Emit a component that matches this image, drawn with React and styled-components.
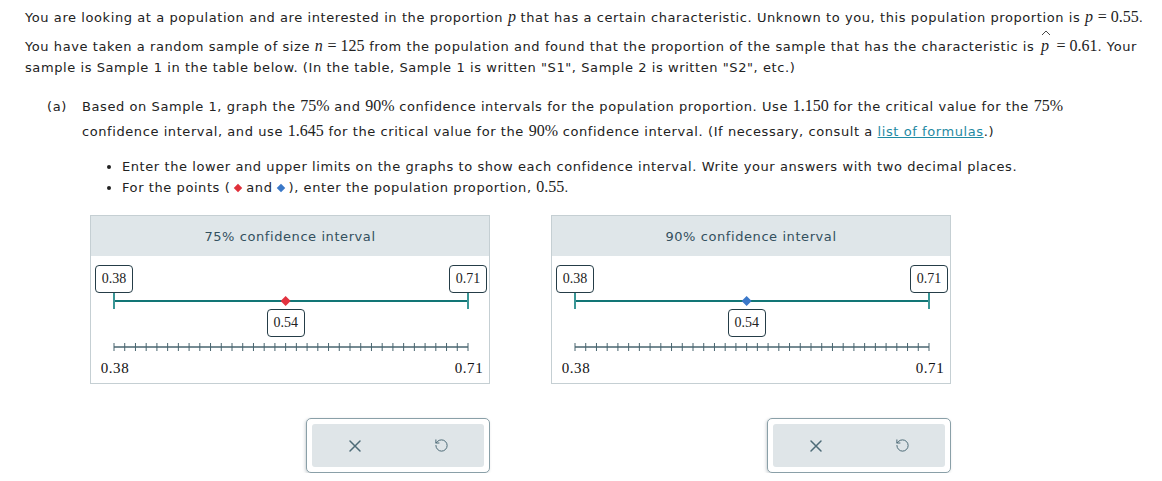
import styled, { createGlobalStyle } from "styled-components";
import { RotateCcw } from "lucide-react";

const GlobalStyle = createGlobalStyle`
  body {
    margin: 0;
    background: #ffffff;
    font-family: "DejaVu Sans", Verdana, sans-serif;
    font-size: 13px;
    letter-spacing: 0.58px;
    color: #222222;
  }
`;

const MIN = 0.38;
const MAX = 0.71;
const X0 = 23;
const X1 = 377;
const toX = (v) => X0 + ((v - MIN) / (MAX - MIN)) * (X1 - X0);

const Page = styled.div`
  padding: 7px 8px 0 25px;
`;

const Para = styled.p`
  margin: 0 0 8px;
  line-height: 21px;
  white-space: nowrap;
`;

const M = styled.span`
  font-family: "Liberation Serif", "Times New Roman", serif;
  font-size: 16px;
  line-height: 1;
  letter-spacing: 0;
  font-style: ${(p) => (p.$italic ? "italic" : "normal")};
`;

const Hat = styled.span`
  position: relative;
  display: inline-block;
  margin: 0 2px;
  font-family: "Liberation Serif", "Times New Roman", serif;
  font-size: 16px;
  line-height: 1;
  font-style: italic;

  svg {
    position: absolute;
    left: 0px;
    top: -8px;
  }
`;

const Part = styled.div`
  display: grid;
  grid-template-columns: 35px 1fr;
  margin: 16px 0 0 22px;
  line-height: 25px;
`;

const Body = styled.div`
  white-space: nowrap;
`;

const Link = styled.a`
  color: #1f8aa3;
  text-decoration: underline;
`;

const Bullets = styled.ul`
  margin: 12px 0 0 57px;
  padding-left: 40px;
  line-height: 21px;
`;

const Dot = styled.span`
  display: inline-block;
  width: 6px;
  height: 6px;
  margin: 0 5px 1px;
  transform: rotate(45deg);
  background: ${(p) => p.$color};
`;

const Row = styled.div`
  display: flex;
  gap: 61px;
  margin: 17px 0 0 65px;
`;

const Column = styled.div`
  display: flex;
  flex-direction: column;
  align-items: flex-end;
  width: 400px;
`;

const Panel = styled.div`
  width: 400px;
  box-sizing: border-box;
  border: 1px solid #c5cfd3;
`;

const Header = styled.div`
  height: 40px;
  background: #dfe6e9;
  color: #33505e;
  display: flex;
  align-items: center;
  justify-content: center;
`;

const Graph = styled.div`
  position: relative;
  height: 127px;

  svg {
    display: block;
  }
`;

const ValueBox = styled.div`
  position: absolute;
  top: ${(p) => p.$top}px;
  width: 38px;
  height: 28px;
  box-sizing: border-box;
  border: 1px solid #253d47;
  border-radius: 4px;
  background: #ffffff;
  display: flex;
  align-items: center;
  justify-content: center;
  font-family: "Liberation Serif", "Times New Roman", serif;
  font-size: 14px;
  letter-spacing: 0;
  color: #222222;
`;

const Tools = styled.div`
  margin-top: 34px;
  width: 184px;
  height: 55px;
  box-sizing: border-box;
  padding: 5px;
  border: 1px solid #8aa0a8;
  border-radius: 5px;
  background: #ffffff;
  box-shadow: -1px 1px 3px rgba(60, 80, 90, 0.25);
`;

const ToolInner = styled.div`
  height: 100%;
  border-radius: 3px;
  background: #dfe5e8;
  display: grid;
  grid-template-columns: 1fr 1fr;
`;

const ToolButton = styled.button`
  border: 0;
  background: transparent;
  display: flex;
  align-items: center;
  justify-content: center;
  color: #4d6b77;
  padding: 0;
`;

const XIcon = () => (
  <svg width="14" height="14" viewBox="0 0 14 14" fill="none" stroke="currentColor" strokeWidth="1.5" strokeLinecap="round">
    <path d="M2 2 L12 12 M12 2 L2 12" />
  </svg>
);

const HatMark = () => (
  <svg width="10" height="6" viewBox="0 0 10 6" fill="none" stroke="#333" strokeWidth="0.9">
    <path d="M1 5 L5 1 L9 5" />
  </svg>
);

const NumberLine = ({ point, color }) => {
  const ticks = [];
  for (let i = 0; i <= 33; i++) {
    const x = X0 + (i * (X1 - X0)) / 33;
    ticks.push(<line key={i} x1={x} x2={x} y1={87} y2={95} stroke="#48656f" strokeWidth="1" />);
  }
  const px = toX(point);
  return (
    <svg width="398" height="127">
      <line x1={X0} x2={X1} y1={45} y2={45} stroke="#127676" strokeWidth="2" />
      <line x1={X0} x2={X0} y1={37} y2={53} stroke="#3a9696" strokeWidth="2" />
      <line x1={X1} x2={X1} y1={37} y2={53} stroke="#3a9696" strokeWidth="2" />
      <polygon points={`${px},${40} ${px + 5},${45} ${px},${50} ${px - 5},${45}`} fill={color} />
      <line x1={X0} x2={X1} y1={91} y2={91} stroke="#48656f" strokeWidth="1.5" />
      {ticks}
      <text x={X0 + 1} y={117} textAnchor="middle" fontFamily="Liberation Serif, serif" fontSize="15" fill="#111">
        0.38
      </text>
      <text x={X1 + 1} y={117} textAnchor="middle" fontFamily="Liberation Serif, serif" fontSize="15" fill="#111">
        0.71
      </text>
    </svg>
  );
};

const IntervalGraph = ({ title, color }) => (
  <Column>
    <Panel>
      <Header>{title}</Header>
      <Graph>
        <NumberLine point={0.54} color={color} />
        <ValueBox $top={9} style={{ left: toX(0.38) - 19 }}>0.38</ValueBox>
        <ValueBox $top={9} style={{ left: toX(0.71) - 19 }}>0.71</ValueBox>
        <ValueBox $top={53} style={{ left: toX(0.54) - 19 }}>0.54</ValueBox>
      </Graph>
    </Panel>
    <Tools>
      <ToolInner>
        <ToolButton aria-label="clear"><XIcon /></ToolButton>
        <ToolButton aria-label="undo"><RotateCcw size={15} strokeWidth={1.6} /></ToolButton>
      </ToolInner>
    </Tools>
  </Column>
);

export default function App() {
  return (
    <>
      <GlobalStyle />
      <Page>
        <Para>
          You are looking at a population and are interested in the proportion <M $italic>p</M> that has a certain
          characteristic. Unknown to you, this population proportion is <M $italic>p</M> <M>= 0.55</M>.
        </Para>
        <Para>
          You have taken a random sample of size <M $italic>n</M> <M>= 125</M> from the population and found that the
          proportion of the sample that has the characteristic is{" "}
          <Hat>
            <HatMark />p
          </Hat>{" "}
          <M>= 0.61</M>. Your
          <br />
          sample is Sample 1 in the table below. (In the table, Sample 1 is written "S1", Sample 2 is written "S2", etc.)
        </Para>
        <Part>
          <span>(a)</span>
          <Body>
            Based on Sample 1, graph the <M>75%</M> and <M>90%</M> confidence intervals for the population proportion.
            Use <M>1.150</M> for the critical value for the <M>75%</M>
            <br />
            confidence interval, and use <M>1.645</M> for the critical value for the <M>90%</M> confidence interval.
            (If necessary, consult a <Link href="#">list of formulas</Link>.)
          </Body>
        </Part>
        <Bullets>
          <li>
            Enter the lower and upper limits on the graphs to show each confidence interval. Write your answers with
            two decimal places.
          </li>
          <li>
            For the points (<Dot $color="#e0303a" />and<Dot $color="#3a78c8" />), enter the population proportion,{" "}
            <M>0.55</M>.
          </li>
        </Bullets>
        <Row>
          <IntervalGraph title="75% confidence interval" color="#e2323f" />
          <IntervalGraph title="90% confidence interval" color="#3b78c9" />
        </Row>
      </Page>
    </>
  );
}
